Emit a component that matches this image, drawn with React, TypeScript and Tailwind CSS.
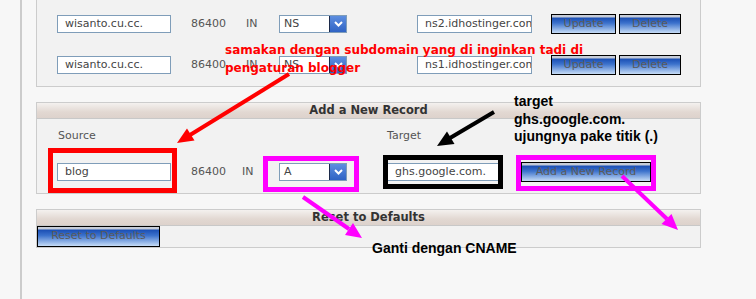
const ui = "font-['DejaVu_Sans',sans-serif]";
const btnBg =
  "bg-[linear-gradient(to_bottom,#c6ccd8_0px,#c6ccd8_2px,#1b4fb4_3px,#3c72cc_45%,#c6dcf6_100%)]";
const headerBg = "bg-[linear-gradient(to_bottom,#f4f1ef,#e2d8d2_60%,#ddd2cc)]";

function TextBox({ value, width }: { value: string; width: string }) {
  return (
    <div
      className={`${width} h-[18px] bg-white border border-[#7f9db9] pl-[7px] text-[11px] leading-[16px] text-[#444] whitespace-nowrap overflow-hidden`}
    >
      {value}
    </div>
  );
}

function Select({ value }: { value: string }) {
  return (
    <div className="w-[68px] h-[18px] flex bg-white border border-[#7f9db9]">
      <div className="flex-1 pl-[4px] text-[11px] leading-[16px] text-[#444]">{value}</div>
      <div className="w-[17px] h-full border-l border-[#1c2a4a] bg-[linear-gradient(to_bottom,#5d8ee0,#2f63c4)] flex items-center justify-center">
        <svg width="9" height="6" viewBox="0 0 9 6">
          <path d="M1 1 L4.5 4.5 L8 1" stroke="white" strokeWidth="2" fill="none" />
        </svg>
      </div>
    </div>
  );
}

function Button({ label, width, height = "h-[20px]" }: { label: string; width: string; height?: string }) {
  return (
    <div
      className={`${width} ${height} ${btnBg} border border-black flex items-center justify-center text-[11px] text-[#5a5a5a] whitespace-nowrap`}
    >
      {label}
    </div>
  );
}

function RecordRow({ source, target }: { source: string; target: string }) {
  return (
    <div className="flex items-center h-[20px]">
      <div className="ml-[20px]">
        <TextBox value={source} width="w-[114px]" />
      </div>
      <div className="ml-[20px] w-[55px] text-[11px] text-[#555]">86400</div>
      <div className="w-[33px] text-[11px] text-[#555]">IN</div>
      <Select value="NS" />
      <div className="ml-[70px]">
        <TextBox value={target} width="w-[115px]" />
      </div>
      <div className="ml-[19px]">
        <Button label="Update" width="w-[65px]" />
      </div>
      <div className="ml-[3px]">
        <Button label="Delete" width="w-[62px]" />
      </div>
    </div>
  );
}

function PanelHeader({ title }: { title: string }) {
  return (
    <div
      className={`h-[16px] ${headerBg} border-b border-[#c8c8c8] text-center text-[11.5px] font-bold leading-[15px] text-[#333]`}
    >
      {title}
    </div>
  );
}

export default function App() {
  return (
    <div className={`relative w-[756px] h-[299px] overflow-hidden bg-[#f7f7f7] ${ui}`}>
      <div className="flex h-full">
        <div className="w-[20px]" />
        <div className="border-l-2 border-[#cccccc] pl-[14px] flex flex-col">
          {/* existing records */}
          <div className="w-[665px] bg-[#f2f2f2] border-x border-b border-[#cccccc] pt-[14px] pb-[11px] flex flex-col gap-[21px]">
            <RecordRow source="wisanto.cu.cc." target="ns2.idhostinger.com." />
            <RecordRow source="wisanto.cu.cc." target="ns1.idhostinger.com." />
          </div>

          {/* add a new record */}
          <div className="mt-[15px] w-[665px] bg-[#f2f2f2] border border-[#cccccc]">
            <PanelHeader title="Add a New Record" />
            <div className="pt-[11px] pb-[11px]">
              <div className="flex h-[13px] items-center text-[11px] text-[#555]">
                <div className="ml-[21px] w-[329px]">Source</div>
                <div>Target</div>
              </div>
              <div className="mt-[19px] flex items-center h-[20px]">
                <div className="ml-[20px]">
                  <TextBox value="blog" width="w-[114px]" />
                </div>
                <div className="ml-[20px] w-[51px] text-[11px] text-[#555]">86400</div>
                <div className="w-[37px] text-[11px] text-[#555]">IN</div>
                <Select value="A" />
                <div className="ml-[40px]">
                  <TextBox value="ghs.google.com." width="w-[113px]" />
                </div>
                <div className="ml-[21px]">
                  <Button label="Add a New Record" width="w-[130px]" />
                </div>
              </div>
            </div>
          </div>

          {/* reset */}
          <div className="mt-[15px] w-[665px] bg-[#f2f2f2] border border-[#cccccc]">
            <PanelHeader title="Reset to Defaults" />
            <Button label="Reset to Defaults" width="w-[123px]" height="h-[21px]" />
          </div>
        </div>
      </div>

      {/* annotations */}
      <svg className="absolute inset-0 pointer-events-none" width="756" height="299">
        <rect x="50.5" y="150.5" width="124" height="40" fill="none" stroke="#ff0000" strokeWidth="5" />
        <rect x="265.5" y="158.5" width="91" height="31" fill="none" stroke="#ff00ff" strokeWidth="5" />
        <rect x="385.5" y="157.5" width="115" height="29" fill="none" stroke="#000000" strokeWidth="5" />
        <rect x="518.5" y="157.5" width="135" height="31" fill="none" stroke="#ff00ff" strokeWidth="5" />

        <line x1="289" y1="74" x2="190" y2="135" stroke="#ff0000" strokeWidth="4" />
        <polygon points="177,143 194.5,140.5 187,128.5" fill="#ff0000" />

        <line x1="494" y1="112" x2="450" y2="138" stroke="#000000" strokeWidth="4" />
        <polygon points="437,146 454.5,144 447,131.5" fill="#000000" />

        <line x1="303" y1="197" x2="349" y2="229" stroke="#ff00ff" strokeWidth="4" />
        <polygon points="362,238 345,235 353,223" fill="#ff00ff" />

        <line x1="622" y1="176" x2="667" y2="219" stroke="#ff00ff" strokeWidth="4" />
        <polygon points="678,230 661.5,224 671.5,214" fill="#ff00ff" />
      </svg>

      <div className="absolute left-[225px] top-[41px] text-[12px] leading-[18px] font-bold text-[#ff0000] whitespace-nowrap">
        samakan dengan subdomain yang di inginkan tadi di
        <br />
        pengaturan blogger
      </div>

      <div className="absolute left-[514px] top-[93px] font-['Liberation_Sans',sans-serif] text-[14px] leading-[17.5px] font-bold text-black whitespace-nowrap">
        target
        <br />
        ghs.google.com.
        <br />
        ujungnya pake titik (.)
      </div>

      <div className="absolute left-[372px] top-[240px] font-['Liberation_Sans',sans-serif] text-[14px] leading-[17px] font-bold text-black whitespace-nowrap">
        Ganti dengan CNAME
      </div>
    </div>
  );
}
